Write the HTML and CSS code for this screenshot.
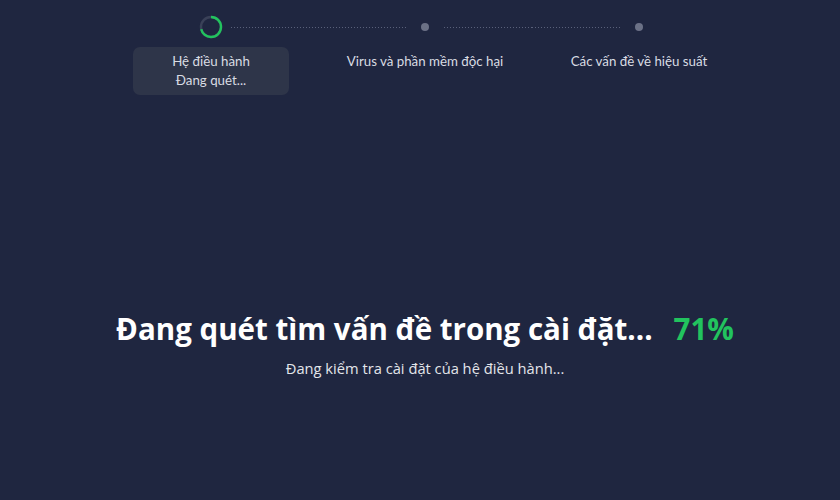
FILE: index.html
```html
<!DOCTYPE html>
<html lang="vi">
<head>
<meta charset="utf-8">
<title>Quét</title>
<link rel="stylesheet" href="styles.css">
</head>
<body>
<div class="page">
  <div class="steps">
    <div class="step">
      <div class="track">
        <span class="line hidden"></span>
        <svg class="spinner" width="24" height="24" viewBox="0 0 24 24">
          <circle cx="12" cy="12" r="10" fill="none" stroke="#3a4158" stroke-width="2.4"/>
          <circle cx="12" cy="12" r="10" fill="none" stroke="#22c35e" stroke-width="2.4" stroke-dasharray="44.6 62.83" transform="rotate(-90 12 12)"/>
        </svg>
        <span class="line"></span>
      </div>
      <div class="label active">Hệ điều hành<br>Đang quét...</div>
    </div>
    <div class="step">
      <div class="track">
        <span class="line"></span>
        <span class="dot"></span>
        <span class="line"></span>
      </div>
      <div class="label">Virus và phần mềm độc hại</div>
    </div>
    <div class="step">
      <div class="track">
        <span class="line"></span>
        <span class="dot"></span>
        <span class="line hidden"></span>
      </div>
      <div class="label">Các vấn đề về hiệu suất</div>
    </div>
  </div>
  <div class="hero">
    <h1 class="title">Đang quét tìm vấn đề trong cài đặt...<span class="pct">71%</span></h1>
    <p class="sub">Đang kiểm tra cài đặt của hệ điều hành...</p>
  </div>
</div>
</body>
</html>
```

FILE: styles.css
```css
html, body {
  margin: 0;
  padding: 0;
  background: #1f2640;
  height: 100%;
}
body {
  font-family: Lato, "Noto Sans", sans-serif;
  color: #ffffff;
}
.page {
  padding-left: 10px;
  display: flex;
  flex-direction: column;
  align-items: center;
}
.steps {
  display: grid;
  grid-template-columns: repeat(3, 214px);
  padding-top: 15px;
}
.step {
  display: flex;
  flex-direction: column;
  align-items: center;
}
.track {
  display: flex;
  align-items: center;
  width: 100%;
  height: 24px;
}
.line {
  flex: 1;
  height: 1px;
  background-image: repeating-linear-gradient(to right, #59607a 0 1px, transparent 1px 3px);
}
.line.hidden {
  visibility: hidden;
}
.spinner {
  display: block;
  margin: 0 8px;
}
.dot {
  width: 8px;
  height: 8px;
  border-radius: 50%;
  background: #6b7186;
  margin: 0 15px;
}
.label {
  margin-top: 8px;
  font-size: 13.3px;
  line-height: 19px;
  color: #d9dce3;
  text-align: center;
  padding: 5px 0;
  border-radius: 7px;
}
.label.active {
  width: 156px;
  background: #2e3549;
}
.hero {
  margin-top: 214px;
  text-align: center;
  font-family: "Open Sans", Lato, sans-serif;
}
.title {
  margin: 0;
  font-size: 29.5px;
  line-height: 40px;
  font-weight: 700;
  color: #ffffff;
}
.pct {
  color: #22c35e;
  margin-left: 21px;
}
.sub {
  margin: 0;
  margin-top: 10px;
  font-size: 14.7px;
  line-height: 18px;
  color: #e3e5ea;
}
```
